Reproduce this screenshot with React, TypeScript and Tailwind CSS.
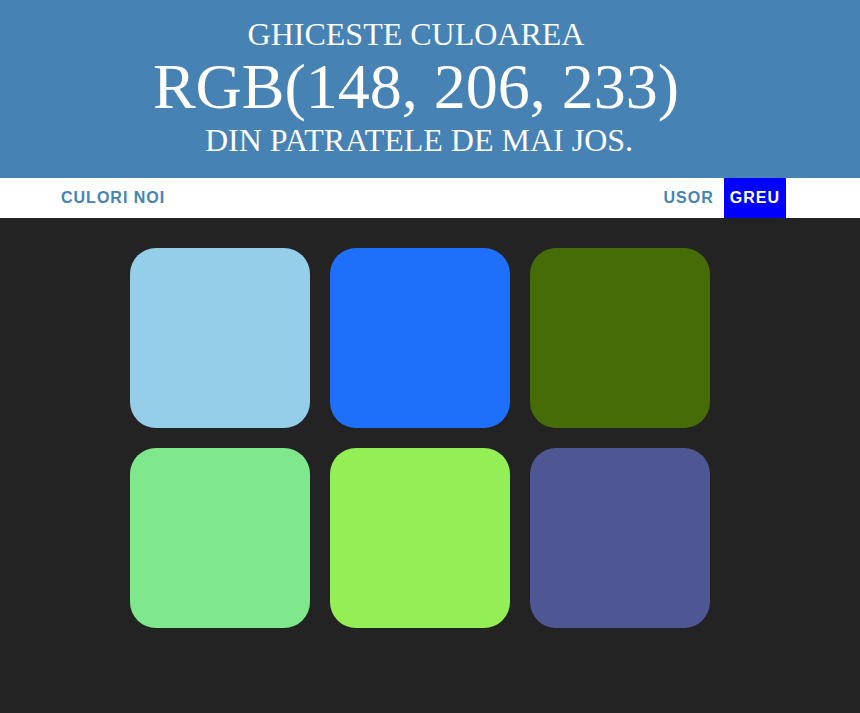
const squares = ['#94cee9', '#1e6ffa', '#466c08', '#7fe88c', '#93ef55', '#4e5693'];

export default function App() {
  return (
    <div className="min-h-screen bg-[#232323]" style={{ fontFamily: '"Liberation Sans", Arial, sans-serif' }}>
      <header className="h-[178px] bg-[#4682b4] pr-[28px] pt-[17px] text-center text-white font-['Liberation_Serif',serif] uppercase">
        <div className="text-[32px] leading-[35.2px]">Ghiceste culoarea</div>
        <div className="text-[64px] leading-[70.4px]">RGB(148, 206, 233)</div>
        <div className="pl-[6px] text-[32px] leading-[35.2px]">Din patratele de mai jos.</div>
      </header>

      <nav className="flex h-10 items-stretch justify-between bg-white pl-[55px] pr-[74px] font-['Liberation_Sans',Arial,sans-serif] text-base font-bold tracking-[1px]">
        <button className="px-[6px] uppercase text-[#4682b4]">Culori noi</button>
        <div className="flex items-stretch gap-[4px]">
          <button className="px-[6px] uppercase text-[#4682b4]">Usor</button>
          <button className="bg-[#0000ff] px-[6px] uppercase text-white">Greu</button>
        </div>
      </nav>

      <main className="mx-auto w-[600px] pt-[30px]">
        <div className="grid grid-cols-[repeat(3,180px)] gap-5">
          {squares.map((c) => (
            <div key={c} className="h-[180px] w-[180px] rounded-[26px]" style={{ backgroundColor: c }} />
          ))}
        </div>
      </main>
    </div>
  );
}
